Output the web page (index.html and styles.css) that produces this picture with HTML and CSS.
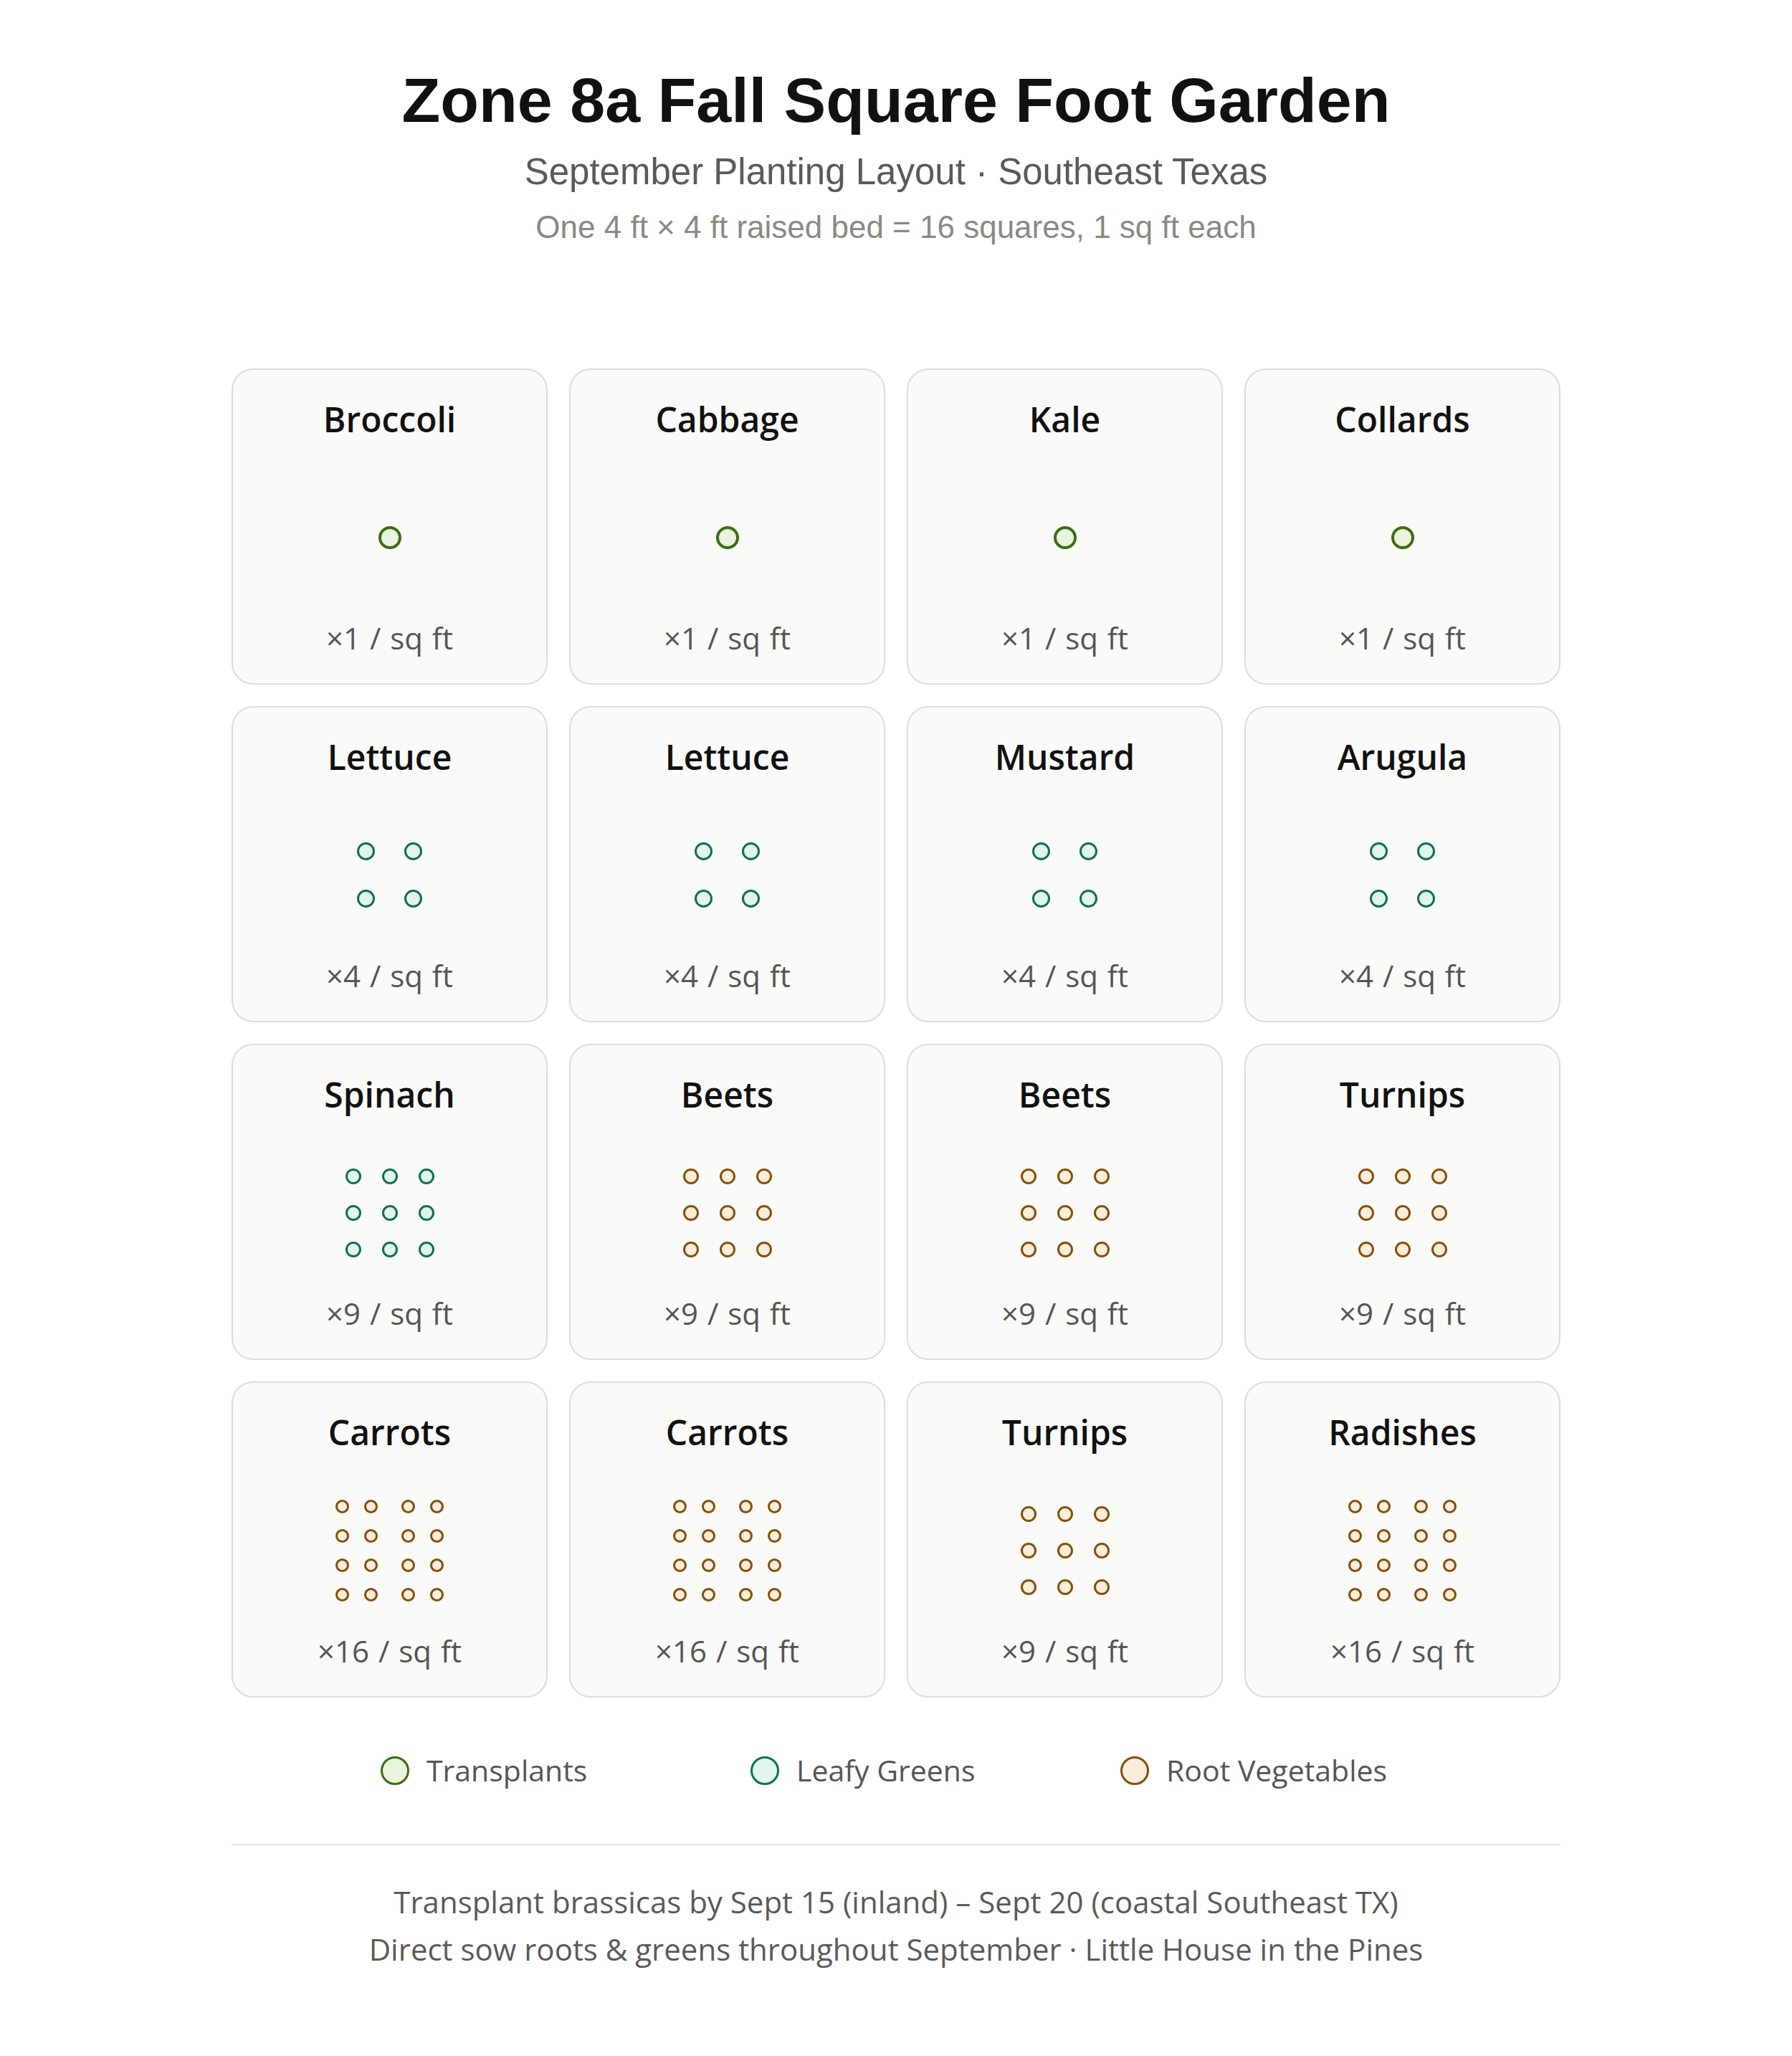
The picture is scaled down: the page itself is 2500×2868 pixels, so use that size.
FILE: index.html
```html
<!DOCTYPE html>
<html lang="en">
<head>
<meta charset="utf-8">
<title>Zone 8a Fall Square Foot Garden</title>
<link rel="stylesheet" href="styles.css">
</head>
<body>
<main class="page">
  <header class="header">
    <h1 class="title">Zone 8a Fall Square Foot Garden</h1>
    <p class="subtitle">September Planting Layout · Southeast Texas</p>
    <p class="note">One 4 ft × 4 ft raised bed = 16 squares, 1 sq ft each</p>
  </header>

  <section class="bed">
    <div class="square">
      <div class="crop">Broccoli</div>
      <div class="plants"><div class="grid grid1 t"><i class="dot"></i></div></div>
      <div class="rate">×1 / sq ft</div>
    </div>
    <div class="square">
      <div class="crop">Cabbage</div>
      <div class="plants"><div class="grid grid1 t"><i class="dot"></i></div></div>
      <div class="rate">×1 / sq ft</div>
    </div>
    <div class="square">
      <div class="crop">Kale</div>
      <div class="plants"><div class="grid grid1 t"><i class="dot"></i></div></div>
      <div class="rate">×1 / sq ft</div>
    </div>
    <div class="square">
      <div class="crop">Collards</div>
      <div class="plants"><div class="grid grid1 t"><i class="dot"></i></div></div>
      <div class="rate">×1 / sq ft</div>
    </div>

    <div class="square">
      <div class="crop">Lettuce</div>
      <div class="plants"><div class="grid grid4 g"><i class="dot"></i><i class="dot"></i><i class="dot"></i><i class="dot"></i></div></div>
      <div class="rate">×4 / sq ft</div>
    </div>
    <div class="square">
      <div class="crop">Lettuce</div>
      <div class="plants"><div class="grid grid4 g"><i class="dot"></i><i class="dot"></i><i class="dot"></i><i class="dot"></i></div></div>
      <div class="rate">×4 / sq ft</div>
    </div>
    <div class="square">
      <div class="crop">Mustard</div>
      <div class="plants"><div class="grid grid4 g"><i class="dot"></i><i class="dot"></i><i class="dot"></i><i class="dot"></i></div></div>
      <div class="rate">×4 / sq ft</div>
    </div>
    <div class="square">
      <div class="crop">Arugula</div>
      <div class="plants"><div class="grid grid4 g"><i class="dot"></i><i class="dot"></i><i class="dot"></i><i class="dot"></i></div></div>
      <div class="rate">×4 / sq ft</div>
    </div>

    <div class="square">
      <div class="crop">Spinach</div>
      <div class="plants"><div class="grid grid9 g"><i class="dot"></i><i class="dot"></i><i class="dot"></i><i class="dot"></i><i class="dot"></i><i class="dot"></i><i class="dot"></i><i class="dot"></i><i class="dot"></i></div></div>
      <div class="rate">×9 / sq ft</div>
    </div>
    <div class="square">
      <div class="crop">Beets</div>
      <div class="plants"><div class="grid grid9 r"><i class="dot"></i><i class="dot"></i><i class="dot"></i><i class="dot"></i><i class="dot"></i><i class="dot"></i><i class="dot"></i><i class="dot"></i><i class="dot"></i></div></div>
      <div class="rate">×9 / sq ft</div>
    </div>
    <div class="square">
      <div class="crop">Beets</div>
      <div class="plants"><div class="grid grid9 r"><i class="dot"></i><i class="dot"></i><i class="dot"></i><i class="dot"></i><i class="dot"></i><i class="dot"></i><i class="dot"></i><i class="dot"></i><i class="dot"></i></div></div>
      <div class="rate">×9 / sq ft</div>
    </div>
    <div class="square">
      <div class="crop">Turnips</div>
      <div class="plants"><div class="grid grid9 r"><i class="dot"></i><i class="dot"></i><i class="dot"></i><i class="dot"></i><i class="dot"></i><i class="dot"></i><i class="dot"></i><i class="dot"></i><i class="dot"></i></div></div>
      <div class="rate">×9 / sq ft</div>
    </div>

    <div class="square">
      <div class="crop">Carrots</div>
      <div class="plants"><div class="grid grid16 r"><i class="dot"></i><i class="dot"></i><i class="dot"></i><i class="dot"></i><i class="dot"></i><i class="dot"></i><i class="dot"></i><i class="dot"></i><i class="dot"></i><i class="dot"></i><i class="dot"></i><i class="dot"></i><i class="dot"></i><i class="dot"></i><i class="dot"></i><i class="dot"></i></div></div>
      <div class="rate">×16 / sq ft</div>
    </div>
    <div class="square">
      <div class="crop">Carrots</div>
      <div class="plants"><div class="grid grid16 r"><i class="dot"></i><i class="dot"></i><i class="dot"></i><i class="dot"></i><i class="dot"></i><i class="dot"></i><i class="dot"></i><i class="dot"></i><i class="dot"></i><i class="dot"></i><i class="dot"></i><i class="dot"></i><i class="dot"></i><i class="dot"></i><i class="dot"></i><i class="dot"></i></div></div>
      <div class="rate">×16 / sq ft</div>
    </div>
    <div class="square">
      <div class="crop">Turnips</div>
      <div class="plants"><div class="grid grid9 r"><i class="dot"></i><i class="dot"></i><i class="dot"></i><i class="dot"></i><i class="dot"></i><i class="dot"></i><i class="dot"></i><i class="dot"></i><i class="dot"></i></div></div>
      <div class="rate">×9 / sq ft</div>
    </div>
    <div class="square">
      <div class="crop">Radishes</div>
      <div class="plants"><div class="grid grid16 r"><i class="dot"></i><i class="dot"></i><i class="dot"></i><i class="dot"></i><i class="dot"></i><i class="dot"></i><i class="dot"></i><i class="dot"></i><i class="dot"></i><i class="dot"></i><i class="dot"></i><i class="dot"></i><i class="dot"></i><i class="dot"></i><i class="dot"></i><i class="dot"></i></div></div>
      <div class="rate">×16 / sq ft</div>
    </div>
  </section>

  <section class="legend">
    <div class="key"><span class="swatch t"></span><span>Transplants</span></div>
    <div class="key"><span class="swatch g"></span><span>Leafy Greens</span></div>
    <div class="key"><span class="swatch r"></span><span>Root Vegetables</span></div>
  </section>

  <hr class="rule">

  <footer class="credits">
    <p>Transplant brassicas by Sept 15 (inland) – Sept 20 (coastal Southeast TX)</p>
    <p>Direct sow roots &amp; greens throughout September · Little House in the Pines</p>
  </footer>
</main>
</body>
</html>
```

FILE: styles.css
```css
* {
  box-sizing: border-box;
}

html,
body {
  margin: 0;
  padding: 0;
  background: #ffffff;
}

body {
  font-family: "Open Sans", "Noto Sans", sans-serif;
  color: #111111;
}

.page {
  width: 1854px;
  margin: 0 auto;
  padding: 90px 0 100px;
}

/* Header */
.header {
  text-align: center;
  font-family: "Liberation Sans", Arial, sans-serif;
}

.title {
  margin: 0;
  font-size: 88px;
  line-height: 100px;
  font-weight: 700;
  color: #111111;
}

.subtitle {
  margin: 21px 0 0;
  font-size: 51px;
  line-height: 58px;
  color: #5a5a58;
}

.note {
  margin: 23px 0 0;
  font-size: 44px;
  line-height: 50px;
  color: #8a8984;
}

/* Bed grid */
.bed {
  margin-top: 172px;
  display: grid;
  grid-template-columns: repeat(4, 441px);
  grid-auto-rows: 441px;
  gap: 30px;
}

.square {
  display: flex;
  flex-direction: column;
  align-items: center;
  padding: 36px 0 35px;
  border: 2px solid #dcdcda;
  border-radius: 30px;
  background: #fafaf9;
}

.crop {
  font-size: 48px;
  line-height: 65px;
  font-weight: 600;
  color: #111111;
  margin-bottom: 21px;
}

.plants {
  flex: 1;
  display: flex;
  align-items: center;
  justify-content: center;
}

.rate {
  font-size: 42px;
  line-height: 57px;
  color: #555555;
  word-spacing: 2px;
}

/* Plant dots */
.grid {
  display: grid;
}

.dot {
  display: block;
  border-radius: 50%;
  border-style: solid;
  border-width: 3px;
}

.grid1 .dot {
  width: 32px;
  height: 32px;
  border-width: 4px;
}

.grid4 {
  grid-template-columns: repeat(2, 25px);
  gap: 41px;
}

.grid4 .dot {
  width: 25px;
  height: 25px;
}

.grid9 {
  grid-template-columns: repeat(3, 22px);
  gap: 29px;
}

.grid9 .dot {
  width: 22px;
  height: 22px;
}

.grid16 {
  grid-template-columns: 19px 19px 30px 19px;
  gap: 22px 21.5px;
}

.grid16 .dot {
  width: 19px;
  height: 19px;
}

.grid16 .dot:nth-child(4n+3) {
  justify-self: end;
}

.t .dot,
.swatch.t {
  border-color: #3b6d11;
  background: #eaf3de;
}

.g .dot,
.swatch.g {
  border-color: #0f6e56;
  background: #e1f5ee;
}

.r .dot,
.swatch.r {
  border-color: #854f0b;
  background: #faeeda;
}

/* Legend */
.legend {
  display: flex;
  margin-top: 73px;
  padding-left: 208px;
}

.key {
  width: 516px;
  display: flex;
  align-items: center;
  gap: 24px;
  font-size: 41px;
  line-height: 57px;
  color: #555555;
}

.key:last-child {
  width: auto;
}

.swatch {
  width: 40px;
  height: 40px;
  border-radius: 50%;
  border-style: solid;
  border-width: 3px;
}

/* Footer */
.rule {
  margin: 74px 0 0;
  border: 0;
  border-top: 2px solid #e3e3e1;
  height: 0;
}

.credits {
  padding-top: 46px;
  text-align: center;
  font-size: 42px;
  line-height: 66px;
  color: #5a5a58;
}

.credits p {
  margin: 0;
}
```
